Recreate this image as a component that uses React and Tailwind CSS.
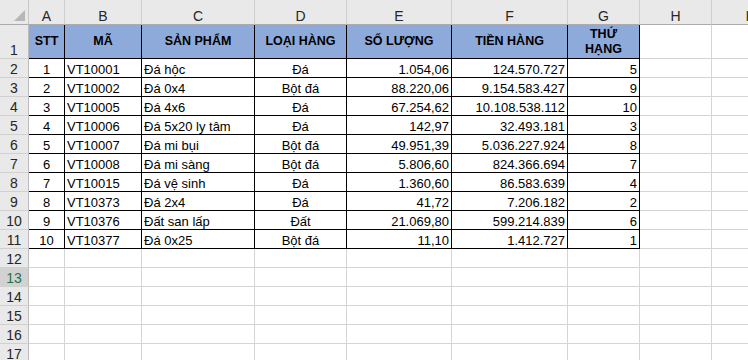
import React from "react";

const rows = [
  [1, "VT10001", "Đá hộc", "Đá", "1.054,06", "124.570.727", 5],
  [2, "VT10002", "Đá 0x4", "Bột đá", "88.220,06", "9.154.583.427", 9],
  [3, "VT10005", "Đá 4x6", "Đá", "67.254,62", "10.108.538.112", 10],
  [4, "VT10006", "Đá 5x20 ly tâm", "Đá", "142,97", "32.493.181", 3],
  [5, "VT10007", "Đá mi bụi", "Bột đá", "49.951,39", "5.036.227.924", 8],
  [6, "VT10008", "Đá mi sàng", "Bột đá", "5.806,60", "824.366.694", 7],
  [7, "VT10015", "Đá vệ sinh", "Đá", "1.360,60", "86.583.639", 4],
  [8, "VT10373", "Đá 2x4", "Đá", "41,72", "7.206.182", 2],
  [9, "VT10376", "Đất san lấp", "Đất", "21.069,80", "599.214.839", 6],
  [10, "VT10377", "Đá 0x25", "Bột đá", "11,10", "1.412.727", 1],
];

const widths = ["w-[36px]", "w-[77px]", "w-[113px]", "w-[92px]", "w-[105px]", "w-[116px]", "w-[72px]"];
const aligns = ["justify-center", "justify-start pl-[2px]", "justify-start pl-[2px]", "justify-center", "justify-end pr-[2px]", "justify-end pr-[2px]", "justify-end pr-[2px]"];
const letters = ["A", "B", "C", "D", "E", "F", "G", "H", "I"];
const allWidths = [...widths, "w-[72px]", "w-[72px]"];
const headers = ["STT", "MÃ", "SẢN PHẨM", "LOẠI HÀNG", "SỐ LƯỢNG", "TIỀN HÀNG"];

function RowHead({ n, h, sel }) {
  return (
    <div
      className={`w-[29px] ${h} shrink-0 flex items-end justify-center border-r border-b border-r-[#bcbcbc] border-b-[#d0d0d0] text-[14px] leading-[15px] ${
        sel ? "bg-[#d2d2d2] text-[#217346]" : "bg-[#e9e9e9] text-[#262626]"
      }`}
    >
      {n}
    </div>
  );
}

export default function App() {
  return (
    <div className="w-[748px] h-[360px] overflow-hidden bg-white font-['Liberation_Sans',Arial,sans-serif] text-black">
      <div className="flex h-[25px]">
        <div className="w-[29px] h-[25px] shrink-0 bg-[#e9e9e9] border-r border-b border-r-[#c8c8c8] border-b-[#ababab] flex items-end justify-end pr-[3px] pb-[3px]">
          <svg width="11" height="11" viewBox="0 0 11 11">
            <polygon points="11,0 11,11 0,11" fill="#b7b7b7" />
          </svg>
        </div>
        {letters.map((l, i) => (
          <div
            key={l}
            className={`${allWidths[i]} h-[25px] shrink-0 bg-[#e9e9e9] border-r border-b border-r-[#cfcfcf] border-b-[#ababab] flex items-end justify-center text-[14px] leading-[15px] text-[#262626]`}
          >
            {l}
          </div>
        ))}
      </div>
      <div className="flex h-[34px]">
        <RowHead n={1} h="h-[34px]" />
        {headers.map((t, i) => (
          <div
            key={t}
            className={`${widths[i]} h-[34px] shrink-0 bg-[#8eaadb] border-r border-b border-black flex items-center justify-center font-bold text-[12.5px] leading-[15px] whitespace-nowrap`}
          >
            {t}
          </div>
        ))}
        <div className="w-[72px] h-[34px] shrink-0 bg-[#8eaadb] border-r border-b border-black flex flex-col items-center justify-center font-bold text-[12.5px] leading-[15px]">
          <span>THỨ</span>
          <span>HẠNG</span>
        </div>
        <div className="w-[72px] h-[34px] shrink-0 border-r border-b border-[#d4d4d4]" />
        <div className="w-[72px] h-[34px] shrink-0 border-r border-b border-[#d4d4d4]" />
      </div>
      {rows.map((r, ri) => (
        <div key={ri} className="flex h-[19px]">
          <RowHead n={ri + 2} h="h-[19px]" />
          {r.map((v, ci) => (
            <div
              key={ci}
              className={`${widths[ci]} ${aligns[ci]} h-[19px] shrink-0 border-r border-b border-black flex items-end text-[13px] leading-[15px] whitespace-nowrap overflow-hidden`}
            >
              {v}
            </div>
          ))}
          <div className="w-[72px] h-[19px] shrink-0 border-r border-b border-[#d4d4d4]" />
          <div className="w-[72px] h-[19px] shrink-0 border-r border-b border-[#d4d4d4]" />
        </div>
      ))}
      {[12, 13, 14, 15, 16, 17].map((n) => (
        <div key={n} className="flex h-[19px]">
          <RowHead n={n} h="h-[19px]" sel={n === 13} />
          {allWidths.map((w, i) => (
            <div key={i} className={`${w} h-[19px] shrink-0 border-r border-b border-[#d4d4d4]`} />
          ))}
        </div>
      ))}
    </div>
  );
}
